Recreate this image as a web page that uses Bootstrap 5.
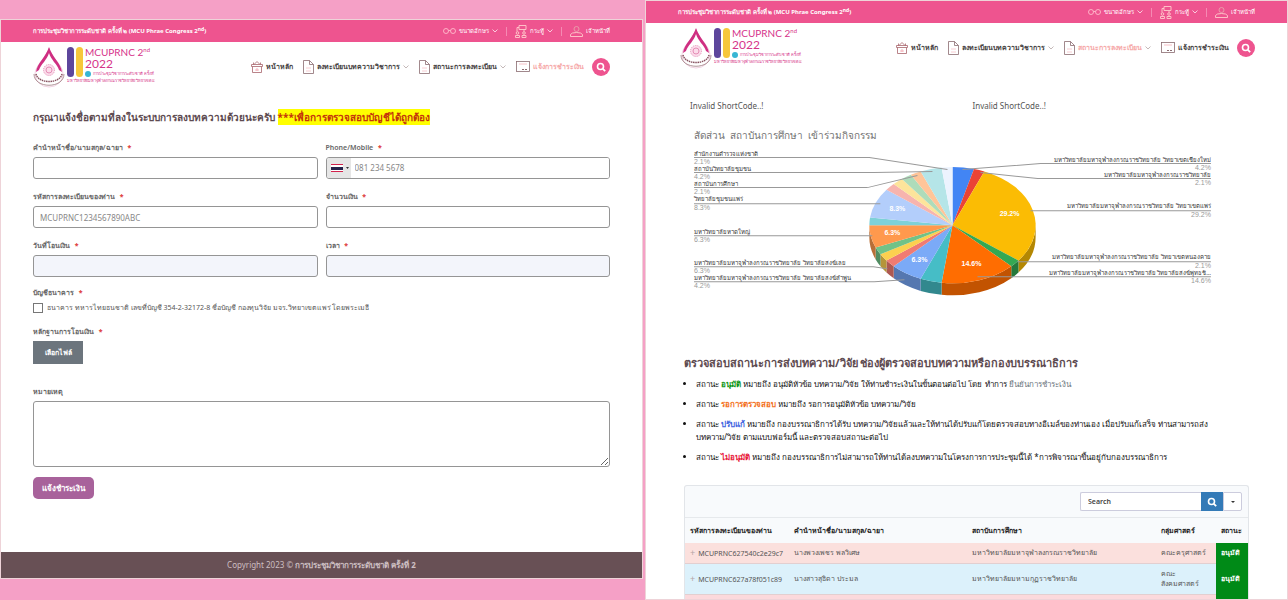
<!DOCTYPE html>
<html lang="th">
<head>
<meta charset="utf-8">
<meta name="viewport" content="width=device-width, initial-scale=1">
<title>MCUPRNC 2022</title>
<link href="https://cdn.jsdelivr.net/npm/bootstrap@5.3.0/dist/css/bootstrap.min.css" rel="stylesheet">
<style>
:root{--pink:#ee548f;--ink:#5d4a50}
body{background:#f5a0c6;font-family:"Noto Sans",Roboto,"DejaVu Sans",sans-serif;font-size:8px;line-height:12px;color:#555}
a{color:inherit;text-decoration:none}
svg{flex:none}
.split{display:grid;grid-template-columns:1fr 1fr;gap:2px;min-height:100vh}
.pane{background:#fff;border:1px solid #eed3d8;min-width:0;display:flex;flex-direction:column}
.pane-form{margin:19px 0 21px}
.inset{padding-left:32px;padding-right:32px}
.mainnav.shifted{padding-left:34px}
.topbar{background:var(--pink);color:#fff;min-height:22px;font-size:6px;line-height:12px}
.topbar .brandline{font-weight:700}
.topbar .brandline sup{font-size:5px}
.topbar a{color:#fff;display:flex;align-items:center;gap:3px;font-weight:500}
.topbar .tools{gap:8px}
.topbar .tools i{width:1px;height:9px;background:#f58ab3}
.mainnav{height:49px}
.mainnav a.item{display:flex;align-items:center;gap:3px;color:#453f42;font-weight:700;font-size:7px;white-space:nowrap}
.mainnav .links{gap:10px}
.mainnav a.item.now{color:#f6a8a8}
.mainnav a.item svg:last-child:not(:first-child){color:#a99}
.find{width:18px;height:18px;border-radius:50%;border:0;padding:0;background:var(--pink);display:grid;place-items:center;margin-left:-2px}
.heading{font-size:10px;line-height:16px;font-weight:700;color:var(--ink);margin:0}
.form-title{margin:18px 0 17px}
.heading mark{background:#ff0;color:#c4350b;padding:1px 0}
.fieldname{display:block;font-size:7px;line-height:12px;font-weight:600;margin-bottom:3px;color:#666}
.fieldname b{color:#e04848;margin-left:3px}
.form-control.box{border:1px solid #959595;border-radius:3px;min-height:22px;height:22px;padding:0 6px;font-size:8px;line-height:20px;color:#777}
.form-control.box::placeholder{color:#888}
.form-control.tinted{background:#f3f5fb}
.form-control.notes{height:66px}
.fieldgrid{display:grid;grid-template-columns:1fr 1fr;column-gap:8px;row-gap:12px}
.after-grid{margin-top:10px}
.gap-notes{margin-top:22px}
.gap-send{margin-top:10px}
.phone{display:flex;border:1px solid #959595;border-radius:3px;height:22px;overflow:hidden}
.phone button{border:0;background:#e6e6e6;width:24px;padding:0 4px;display:flex;align-items:center;gap:3px}
.phone input{border:0;flex:1;min-width:0;padding:0 4px;font-size:8px;color:#777}
.phone input::placeholder{color:#888}
.form-check-input.tick{width:10px;height:10px;border-radius:0;border-color:#777;margin:0;float:none;flex:none}
.bank{font-size:7px}
.filebtn{background:#6c757d;color:#fff;border:0;height:23px;width:50px;font-size:7px;font-weight:600;padding:0}
.sendbtn{background:#a8629b;color:#fff;border:0;border-radius:5px;height:22px;width:61px;font-size:8px;font-weight:600;padding:0}
.foot{background:#685055;color:#cdbfc2;height:26px;font-size:8px}
.status{padding:28px 38px 0}
.shortcodes{margin-bottom:8px}
.shortcodes span{padding-left:6px}
.status-title{font-size:11px;margin:45px 0 6px}
.states{padding-left:12px;margin:0 0 22px;color:#111;font-size:8px;line-height:13px}
.states li{margin-bottom:7px}
.gridbox{border:1px solid #e2e5e9;border-bottom:0;border-radius:3px 3px 0 0;background:#f8fafc}
.gridtools{padding:6px}
.seek{width:162px;height:19px;display:flex}
.seek input{flex:1;min-width:0;border:1px solid #ccd;border-right:0;border-radius:2px 0 0 2px;font-size:7px;font-weight:600;padding:0 7px}
.seek input::placeholder{color:#444}
.seek .go{width:22px;background:#337ab7;border:0;padding:0;display:grid;place-items:center}
.seek .more{width:19px;background:#fff;border:1px solid #ccd;border-radius:0 2px 2px 0;padding:0;display:grid;place-items:center}
.records{width:100%;table-layout:fixed;font-size:7px;line-height:10px;border-collapse:collapse}
.records th{height:25px;color:#222;padding:0 5px;white-space:nowrap;border-top:1px solid #e6e9ec;overflow:hidden}
.records td{padding:0 5px;border-bottom:1px solid #e2cfd0;white-space:nowrap}
.records .plus{color:#b5a5a5;font-size:9px;margin:0 3px 0 0}
.records .rose td{background:#fbe0dd;height:21px}
.records .sky td{background:#dcf1fb;height:31px}
.records tr.next td{background:#fbd9dc;height:4px;border:0}
.records tr td.ok{background:#008a17;color:#fff;border-color:#008a17;font-weight:600}
.chart text{font-size:6px;fill:#333}
.chart text.pct{font-size:7px;fill:#999;font-family:"Liberation Sans",sans-serif}
.chart text.inpie{font-size:7px;fill:#fff;font-family:"Liberation Sans",sans-serif;font-weight:700;text-anchor:middle}
.chart .end text{text-anchor:end}
.chart text.cap{font-size:10px;fill:#757575}
.chart .pointers{fill:none;stroke:#999;stroke-width:1}
</style>
</head>
<body>
<svg width="0" height="0" class="position-absolute" aria-hidden="true">
<defs>
<symbol id="logo" viewBox="0 0 122 42">
<g transform="translate(1 1)">
<path d="M15 1C12 12 1 18 1 27a14 13 0 0 0 28 0C29 18 18 12 15 1Z" fill="#fff" stroke="#e7b3cf" stroke-width=".6"/>
<path d="M15 0C12 10 3 16 2 25L5 23C7 17 13 13 15 6c2 7 8 11 10 17l3 2C27 16 18 10 15 0Z" fill="#cf2f82"/>
<circle cx="15" cy="23" r="5.500" fill="#fbdcea" stroke="#e58db7" stroke-dasharray="1 1"/><circle cx="15" cy="23" r="3" fill="none" stroke="#e58db7"/>
<path d="M2 27c2 10 24 10 26 0" fill="none" stroke="#86515e" stroke-width="1.500" stroke-dasharray="1.500 .7"/>
<path d="M0 27c0 15 30 15 30 0" fill="none" stroke="#9c7a7e" stroke-width=".8"/>
<rect x="33" y="0" width="7" height="30" rx="3.500" fill="#5d469c"/><rect x="42" y="0" width="7" height="30" rx="3.500" fill="#f6c73b"/>
<circle cx="54" cy="27" r="3" fill="#38b6d4"/>
<g fill="#d6338a"><text x="51" y="9" font-family="Lato,sans-serif" font-size="10">MCUPRNC 2<tspan dy="-4" font-size="6">nd</tspan></text>
<text x="51" y="21" font-family="Lato,sans-serif" font-size="12">2022</text>
<text x="59" y="28" font-size="4">การประชุมวิชาการระดับชาติ ครั้งที่ 2</text>
<text x="33" y="35" font-size="4">มหาวิทยาลัยมหาจุฬาลงกรณราชวิทยาลัย วิทยาเขตแพร่</text></g>
</g>
</symbol>
<symbol id="home" viewBox="0 0 12 12"><path d="M.5 3.500h11v2h-11ZM1.500 5.500v6h9v-6M3 3.500l3-3 3 3M2.500 1.500v2M9.500 1.500v2" fill="none" stroke="#a8656c" stroke-width=".8"/><path d="M4 9h4M6 7v3" stroke="#f3a3ad" stroke-width=".8"/></symbol>
<symbol id="page" viewBox="0 0 11 14"><path d="M.5.5h6l4 4v9H.5ZM6.500.5v4h4" fill="none" stroke="#8a6b70" stroke-width=".8"/><path d="M3 8h5M3 11h5" stroke="#f6c0c6" stroke-width=".8"/></symbol>
<symbol id="cash" viewBox="0 0 14 11"><rect x=".5" y=".5" width="13" height="10" fill="none" stroke="#8a6b70" stroke-width=".8"/><path d="M6 8.500h2M9 8.500h2" stroke="#8a6b70"/><path d="M3 3h8" stroke="#f6c0c6"/></symbol>
<symbol id="down" viewBox="0 0 6 4"><path d="m.5.5 2.500 2.500L5.500.5" fill="none" stroke="currentColor" stroke-width=".7"/></symbol>
<symbol id="mag" viewBox="0 0 10 10"><circle cx="4.500" cy="4.500" r="3" fill="none" stroke="#fff" stroke-width="1.600"/><path d="m6.800 6.800 2.400 2.400" stroke="#fff" stroke-width="1.800"/></symbol>
<symbol id="glasses" viewBox="0 0 13 8"><g fill="none" stroke="#fbc" stroke-width=".9"><circle cx="3" cy="4" r="2.500"/><circle cx="10" cy="4" r="2.500"/><path d="M5.500 3.500h2"/></g></symbol>
<symbol id="board" viewBox="0 0 12 13"><g fill="none" stroke="#fcc" stroke-width=".9"><path d="M4 .5h7v4H4ZM4 2.500H2v4M9 4.500v2"/><circle cx="2.500" cy="8" r="1.300"/><circle cx="9" cy="8" r="1.300"/><path d="M.5 12.500v-2h4v2ZM7 12.500v-2h4v2Z"/></g></symbol>
<symbol id="user" viewBox="0 0 13 11"><g fill="none" stroke="#e9a0ac" stroke-width=".9"><circle cx="6.500" cy="3" r="2.500"/><path stroke="#fcc" d="M.5 10.500v-2q1-2 6-2t6 2v2Z"/></g></symbol>
</defs>
</svg>

<div class="split">
<section class="pane pane-form">
<header>
<div class="topbar inset d-flex align-items-center justify-content-between">
<span class="brandline">การประชุมวิชาการระดับชาติ ครั้งที่ ๒ (MCU Phrae Congress 2<sup>nd</sup>)</span>
<div class="tools d-flex align-items-center"><a href="#"><svg width="13" height="8"><use href="#glasses"/></svg>ขนาดอักษร<svg width="6" height="4"><use href="#down"/></svg></a><i></i><a href="#"><svg width="12" height="13"><use href="#board"/></svg>กระทู้<svg width="6" height="4"><use href="#down"/></svg></a><i></i><a href="#"><svg width="13" height="11"><use href="#user"/></svg>เจ้าหน้าที่</a></div>
</div>
<nav class="mainnav inset d-flex align-items-center justify-content-between">
<a href="#" aria-label="MCUPRNC 2022"><svg width="122" height="42"><use href="#logo"/></svg></a>
<div class="links d-flex align-items-center">
<a class="item" href="#"><svg width="12" height="12"><use href="#home"/></svg>หน้าหลัก</a>
<a class="item" href="#"><svg width="11" height="14"><use href="#page"/></svg>ลงทะเบียนบทความวิชาการ<svg width="6" height="4"><use href="#down"/></svg></a>
<a class="item" href="#"><svg width="11" height="14"><use href="#page"/></svg>สถานะการลงทะเบียน<svg width="6" height="4"><use href="#down"/></svg></a>
<a class="item now" href="#"><svg width="14" height="11"><use href="#cash"/></svg>แจ้งการชำระเงิน</a>
<button class="find" type="button" aria-label="ค้นหา"><svg width="10" height="10"><use href="#mag"/></svg></button>
</div>
</nav>
</header>
<main class="inset flex-grow-1">
<h1 class="heading form-title">กรุณาแจ้งชื่อตามที่ลงในระบบการลงบทความด้วยนะครับ <mark>***เพื่อการตรวจสอบบัญชีได้ถูกต้อง</mark></h1>
<form>
<div class="fieldgrid">
<div><label class="fieldname" for="nm">คำนำหน้าชื่อ/นามสกุล/ฉายา <b>*</b></label><input id="nm" class="form-control box"></div>
<div><label class="fieldname" for="ph">Phone/Mobile <b>*</b></label><div class="phone"><button type="button" aria-label="ประเทศไทย"><svg width="12" height="8"><path fill="#d3224c" d="M0 0h12v8H0z"/><path fill="#fff" d="M0 1h12v6H0z"/><path fill="#25234a" d="M0 3h12v3H0z"/></svg><svg width="3" height="2"><path d="M0 0h3L1.500 2Z" fill="#333"/></svg></button><input id="ph" type="tel" placeholder="081 234 5678"></div></div>
<div><label class="fieldname" for="code">รหัสการลงทะเบียนของท่าน <b>*</b></label><input id="code" class="form-control box" placeholder="MCUPRNC1234567890ABC"></div>
<div><label class="fieldname" for="amt">จำนวนเงิน <b>*</b></label><input id="amt" class="form-control box"></div>
<div><label class="fieldname" for="dt">วันที่โอนเงิน <b>*</b></label><input id="dt" class="form-control box tinted"></div>
<div><label class="fieldname" for="tm">เวลา <b>*</b></label><input id="tm" class="form-control box tinted"></div>
</div>
<fieldset class="after-grid"><legend class="fieldname">บัญชีธนาคาร <b>*</b></legend>
<div class="d-flex align-items-center gap-1"><input id="bank" class="form-check-input tick" type="checkbox"><label class="bank" for="bank">ธนาคาร ทหารไทยธนชาติ เลขที่บัญชี 354-2-32172-8 ชื่อบัญชี กองทุนวิจัย มจร.วิทยาเขตแพร่ โดยพระเมธี</label></div></fieldset>
<div class="mt-2 pt-1"><label class="fieldname" for="file">หลักฐานการโอนเงิน <b>*</b></label><button id="file" class="filebtn d-block" type="button">เลือกไฟล์</button></div>
<div class="gap-notes"><label class="fieldname" for="note">หมายเหตุ</label><textarea id="note" class="form-control box notes"></textarea></div>
<button class="sendbtn d-block gap-send" type="button">แจ้งชำระเงิน</button>
</form>
</main>
<footer class="foot d-flex align-items-center justify-content-center">Copyright 2023 ©&nbsp;<b>การประชุมวิชาการระดับชาติ ครั้งที่ 2</b></footer>
</section>

<section class="pane">
<header>
<div class="topbar inset d-flex align-items-center justify-content-between">
<span class="brandline">การประชุมวิชาการระดับชาติ ครั้งที่ ๒ (MCU Phrae Congress 2<sup>nd</sup>)</span>
<div class="tools d-flex align-items-center"><a href="#"><svg width="13" height="8"><use href="#glasses"/></svg>ขนาดอักษร<svg width="6" height="4"><use href="#down"/></svg></a><i></i><a href="#"><svg width="12" height="13"><use href="#board"/></svg>กระทู้<svg width="6" height="4"><use href="#down"/></svg></a><i></i><a href="#"><svg width="13" height="11"><use href="#user"/></svg>เจ้าหน้าที่</a></div>
</div>
<nav class="mainnav inset shifted d-flex align-items-center justify-content-between">
<a href="#" aria-label="MCUPRNC 2022"><svg width="122" height="42"><use href="#logo"/></svg></a>
<div class="links d-flex align-items-center">
<a class="item" href="#"><svg width="12" height="12"><use href="#home"/></svg>หน้าหลัก</a>
<a class="item" href="#"><svg width="11" height="14"><use href="#page"/></svg>ลงทะเบียนบทความวิชาการ<svg width="6" height="4"><use href="#down"/></svg></a>
<a class="item now" href="#"><svg width="11" height="14"><use href="#page"/></svg>สถานะการลงทะเบียน<svg width="6" height="4"><use href="#down"/></svg></a>
<a class="item" href="#"><svg width="14" height="11"><use href="#cash"/></svg>แจ้งการชำระเงิน</a>
<button class="find" type="button" aria-label="ค้นหา"><svg width="10" height="10"><use href="#mag"/></svg></button>
</div>
</nav>
</header>
<main class="status">
<div class="d-flex shortcodes"><span class="w-50">Invalid ShortCode..!</span><span class="w-50">Invalid ShortCode..!</span></div>
<svg class="chart d-block w-100" viewBox="685 120 564 190" role="img" aria-label="สัดส่วน สถาบันการศึกษา">
<text class="cap" x="695" y="139">สัดส่วน&#160; สถาบันการศึกษา&#160; เข้าร่วมกิจกรรม</text>
<g id="pie"></g>
<g class="pointers"><path d="M695 157.500h175l78 12M695 172.500h180l58-1M695 187.500h173l50-12M695 203.500h186M695 235.500h178M695 266.500h179l14 2M695 281.500h180l30-2M1211 163.500h-170l-78 6M1211 178.500h-173l-57-6M1211 210.500h-180M1211 261.500h-193M1211 276.500h-233"/></g>
<g>
<text x="695" y="156">สำนักงานตำรวจแห่งชาติ</text><text class="pct" x="695" y="164">2.1%</text>
<text x="695" y="171">สถาบันวิทยาลัยชุมชน</text><text class="pct" x="695" y="179">4.2%</text>
<text x="695" y="186">สถาบันการศึกษา</text><text class="pct" x="695" y="194">2.1%</text>
<text x="695" y="201">วิทยาลัยชุมชนแพร่</text><text class="pct" x="695" y="210">8.3%</text>
<text x="695" y="234">มหาวิทยาลัยหาดใหญ่</text><text class="pct" x="695" y="242">6.3%</text>
<text x="695" y="265">มหาวิทยาลัยมหาจุฬาลงกรณราชวิทยาลัย วิทยาลัยสงฆ์เลย</text><text class="pct" x="695" y="273">6.3%</text>
<text x="695" y="280">มหาวิทยาลัยมหาจุฬาลงกรณราชวิทยาลัย วิทยาลัยสงฆ์ลำพูน</text><text class="pct" x="695" y="288">4.2%</text>
</g>
<g class="end">
<text x="1211" y="162">มหาวิทยาลัยมหาจุฬาลงกรณราชวิทยาลัย วิทยาเขตเชียงใหม่</text><text class="pct" x="1211" y="170">4.2%</text>
<text x="1211" y="177">มหาวิทยาลัยมหาจุฬาลงกรณราชวิทยาลัย</text><text class="pct" x="1211" y="185">2.1%</text>
<text x="1211" y="208">มหาวิทยาลัยมหาจุฬาลงกรณราชวิทยาลัย วิทยาเขตแพร่</text><text class="pct" x="1211" y="217">29.2%</text>
<text x="1211" y="259">มหาวิทยาลัยมหาจุฬาลงกรณราชวิทยาลัย วิทยาเขตหนองคาย</text><text class="pct" x="1211" y="268">2.1%</text>
<text x="1211" y="275">มหาวิทยาลัยมหาจุฬาลงกรณราชวิทยาลัย วิทยาลัยสงฆ์พุทธชิ…</text><text class="pct" x="1211" y="283">14.6%</text>
</g>
<text class="inpie" x="1010" y="216">29.2%</text><text class="inpie" x="972" y="266">14.6%</text><text class="inpie" x="920" y="262">6.3%</text><text class="inpie" x="893" y="235">6.3%</text><text class="inpie" x="898" y="211">8.3%</text>
</svg>
<h2 class="heading status-title">ตรวจสอบสถานะการส่งบทความ/วิจัย ช่องผู้ตรวจสอบบทความหรือกองบบรรณาธิการ</h2>
<ul class="states">
<li>สถานะ <b style="color:#109618">อนุมัติ</b> หมายถึง อนุมัติหัวข้อ บทความ/วิจัย ให้ท่านชำระเงินในขั้นตอนต่อไป โดย ทำการ <a href="#" class="text-secondary">ยืนยันการชำระเงิน</a></li>
<li>สถานะ <b style="color:#f37021">รอการตรวจสอบ</b> หมายถึง รอการอนุมัติหัวข้อ บทความ/วิจัย</li>
<li>สถานะ <b style="color:#3d62e0">ปรับแก้</b> หมายถึง กองบรรณาธิการได้รับ บทความ/วิจัยแล้วและให้ท่านได้ปรับแก้โดยตรวจสอบทางอีเมล์ของท่านเอง เมื่อปรับแก้เสร็จ ท่านสามารถส่ง<br>บทความ/วิจัย ตามแบบฟอร์มนี้ และตรวจสอบสถานะต่อไป</li>
<li>สถานะ <b style="color:#e8203c">ไม่อนุมัติ</b> หมายถึง กองบรรณาธิการไม่สามารถให้ท่านได้ลงบทความในโครงการการประชุมนี้ได้ *การพิจารณาขึ้นอยู่กับกองบรรณาธิการ</li>
</ul>
<div class="gridbox">
<div class="gridtools d-flex justify-content-end"><div class="seek"><input type="search" placeholder="Search" aria-label="Search"><button class="go" type="button" aria-label="Search"><svg width="10" height="10"><use href="#mag"/></svg></button><button class="more" type="button" aria-label="More"><svg width="4" height="2"><path d="M0 0h4L2 2Z" fill="#333"/></svg></button></div></div>
<table class="records">
<colgroup><col style="width:104px"><col style="width:178px"><col><col style="width:60px"><col style="width:32px"></colgroup>
<thead><tr><th>รหัสการลงทะเบียนของท่าน</th><th>คำนำหน้าชื่อ/นามสกุล/ฉายา</th><th>สถาบันการศึกษา</th><th>กลุ่มศาสตร์</th><th>สถานะ</th></tr></thead>
<tbody>
<tr class="rose"><td><span class="plus">+</span>MCUPRNC627540c2e29c7</td><td>นางพวงเพชร พลวิเศษ</td><td>มหาวิทยาลัยมหาจุฬาลงกรณราชวิทยาลัย</td><td>คณะครุศาสตร์</td><td class="ok">อนุมัติ</td></tr>
<tr class="sky"><td><span class="plus">+</span>MCUPRNC627a78f051c89</td><td>นางสาวสุธิดา ประมล</td><td>มหาวิทยาลัยมหามกุฏราชวิทยาลัย</td><td>คณะ<br>สังคมศาสตร์</td><td class="ok">อนุมัติ</td></tr>
<tr class="next"><td></td><td></td><td></td><td></td><td class="ok"></td></tr>
</tbody></table>
</div>
</main>
</section>
</div>
<script src="https://cdn.jsdelivr.net/npm/bootstrap@5.3.0/dist/js/bootstrap.bundle.min.js"></script>
<script>
// Participants per institution, clockwise from the top: [count, face, rim]
const slices=[[2,'#4285f4','#2f5fb0'],[1,'#ea4335','#a83026'],[14,'#fbbc04','#b48703'],[1,'#34a853','#25793c'],[7,'#ff6d01','#c25301'],[2,'#46bdc6','#32888e'],[3,'#7baaf7','#5577b0'],[1,'#f07b72','#ad5952'],[1,'#fcd04f','#b59539'],[1,'#71c287','#518c61'],[3,'#ff994d','#b86e37'],[1,'#7ed1d7','#5b969b'],[4,'#b3cefb','#8194b5'],[1,'#f7b4ae','#b2827d'],[1,'#fde49b','#b6a470'],[1,'#aedcba','#7d9e86'],[1,'#ffc599','#b88e6e'],[2,'#b5e5e8','#82a5a7'],[1,'#ecf3fe','#aaafb7']];
const cx=953,cy=225,rx=83,ry=58,depth=12,total=slices.reduce((t,s)=>t+s[0],0);
const at=a=>[cx+rx*Math.sin(a),cy-ry*Math.cos(a)];
let turn=0,rims='',faces='';
for(const [n,face,rim] of slices){
  const a=turn,b=turn+n/total*2*Math.PI,[x,y]=at(a),[u,v]=at(b);turn=b;
  faces+=`<path fill="${face}" d="M${cx} ${cy}L${x} ${y}A${rx} ${ry} 0 0 1 ${u} ${v}Z"/>`;
  const lo=Math.max(a,Math.PI/2),hi=Math.min(b,Math.PI*1.5);
  if(lo<hi){const [p,q]=at(lo),[r,s]=at(hi);rims+=`<path fill="${rim}" d="M${p} ${q}A${rx} ${ry} 0 0 1 ${r} ${s}v${depth}A${rx} ${ry} 0 0 0 ${p} ${q+depth}Z"/>`}
}
document.getElementById('pie').innerHTML=rims+faces;
</script>
</body>
</html>
